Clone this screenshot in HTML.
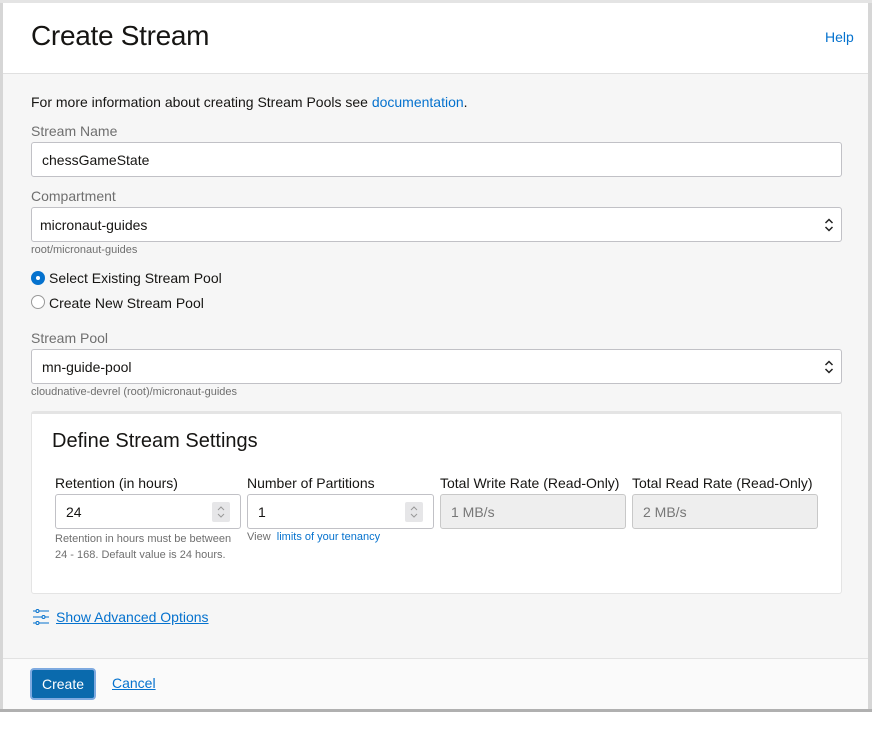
<!DOCTYPE html>
<html><head><style>
*{box-sizing:border-box;margin:0;padding:0}
body{width:873px;height:743px;background:#fff;font-family:"Liberation Sans",sans-serif;position:relative;overflow:hidden;color:#161513}
.frame{position:absolute;left:0;top:0;width:872px;height:712px;background:#d6d6d6;border-top:3px solid #e4e4e4}
.hdr{position:absolute;left:3px;top:3px;width:865px;height:71px;background:#fff;border-bottom:1px solid #e0e0e0}
.body{position:absolute;left:3px;top:74px;width:865px;height:585px;background:#f6f6f6}
.ftr{position:absolute;left:3px;top:658px;width:865px;height:51px;background:#fafafa;border-top:1px solid #e2e2e2}
.shadow{position:absolute;left:0;top:709px;width:872px;height:3px;background:#b0b0b0}
.a{position:absolute;white-space:nowrap}
.lbl{font-size:14px;color:#6f6f6f}
.inp{position:absolute;background:#fff;border:1px solid #c1c1c6;border-radius:3px;font-size:14px;color:#161513;padding-left:10px;display:flex;align-items:center}
.sm{font-size:11px;color:#6f6f6f}
.blue{color:#0572ce}
.arr{position:absolute;right:6px;top:8px}
.spin{position:absolute;right:10px;top:7px;width:18px;height:20px;background:#e6e6e8;border-radius:2px}
.ro{background:#eeeeee;color:#777;border-color:#c8c8c8}
</style></head><body>
<div class="frame"></div>
<div class="hdr"></div>
<div class="body"></div>
<div class="ftr"></div>
<div class="shadow"></div>
<div class="a" style="left:31px;top:20px;font-size:28px;color:#161513;letter-spacing:-0.3px">Create Stream</div>
<div class="a blue" style="left:825px;top:29px;font-size:14px">Help</div>
<div class="a" style="left:31px;top:94px;font-size:14px">For more information about creating Stream Pools see <span class="blue">documentation</span>.</div>
<div class="a lbl" style="left:31px;top:123px">Stream Name</div>
<div class="inp" style="left:31px;top:142px;width:811px;height:35px">chessGameState</div>
<div class="a lbl" style="left:31px;top:188px">Compartment</div>
<div class="inp" style="left:31px;top:207px;width:811px;height:35px;padding-left:8px">micronaut-guides<svg class="arr" width="12" height="18" viewBox="0 0 12 18" fill="none" stroke="#222" stroke-width="1.5"><path d="M2.5 7L6 3.5L9.5 7M2.5 11L6 14.5L9.5 11"/></svg></div>
<div class="a sm" style="left:31px;top:244px">root/micronaut-guides</div>
<div class="a" style="left:31px;top:271px;width:14px;height:14px;border-radius:50%;background:#0572ce"><div style="position:absolute;left:5px;top:5px;width:4px;height:4px;border-radius:50%;background:#fff"></div></div>
<div class="a" style="left:49px;top:270px;font-size:14px">Select Existing Stream Pool</div>
<div class="a" style="left:31px;top:295px;width:14px;height:14px;border-radius:50%;border:1px solid #999;background:#fff"></div>
<div class="a" style="left:49px;top:295px;font-size:14px">Create New Stream Pool</div>
<div class="a lbl" style="left:31px;top:330px">Stream Pool</div>
<div class="inp" style="left:31px;top:349px;width:811px;height:35px;padding-left:10px">mn-guide-pool<svg class="arr" width="12" height="18" viewBox="0 0 12 18" fill="none" stroke="#222" stroke-width="1.5"><path d="M2.5 7L6 3.5L9.5 7M2.5 11L6 14.5L9.5 11"/></svg></div>
<div class="a sm" style="left:31px;top:386px">cloudnative-devrel (root)/micronaut-guides</div>
<div class="a" style="left:31px;top:411px;width:811px;height:183px;background:#fff;border:1px solid #e4e4e4;border-top:3px solid #e4e4e4;border-radius:3px"></div>
<div class="a" style="left:52px;top:430px;font-size:20px">Define Stream Settings</div>
<div class="a" style="left:55px;top:475px;font-size:14px">Retention (in hours)</div>
<div class="a" style="left:247px;top:475px;font-size:14px">Number of Partitions</div>
<div class="a" style="left:440px;top:475px;font-size:14px">Total Write Rate (Read-Only)</div>
<div class="a" style="left:632px;top:475px;font-size:14px">Total Read Rate (Read-Only)</div>
<div class="inp" style="left:55px;top:494px;width:186px;height:35px">24<svg class="spin" viewBox="0 0 18 20" fill="none" stroke="#999" stroke-width="1"><path d="M6 8L9 5L12 8M6 12L9 15L12 12"/></svg></div>
<div class="inp" style="left:247px;top:494px;width:187px;height:35px">1<svg class="spin" viewBox="0 0 18 20" fill="none" stroke="#999" stroke-width="1"><path d="M6 8L9 5L12 8M6 12L9 15L12 12"/></svg></div>
<div class="inp ro" style="left:440px;top:494px;width:186px;height:35px">1 MB/s</div>
<div class="inp ro" style="left:632px;top:494px;width:186px;height:35px">2 MB/s</div>
<div class="a sm" style="left:55px;top:531px;line-height:16px">Retention in hours must be between<br>24 - 168. Default value is 24 hours.</div>
<div class="a sm" style="left:247px;top:531px">View &nbsp;<span class="blue">limits of your tenancy</span></div>
<svg class="a" style="left:32px;top:608px" width="18" height="18" viewBox="0 0 18 18" fill="none" stroke="#0572ce" stroke-width="1"><path d="M1 3h3M7 3h10M1 9h9M13 9h4M1 15h3M7 15h10"/><circle cx="5.5" cy="3" r="1.5"/><circle cx="11.5" cy="9" r="1.5"/><circle cx="5.5" cy="15" r="1.5"/></svg>
<div class="a blue" style="left:56px;top:609px;font-size:14px;text-decoration:underline">Show Advanced Options</div>
<div class="a" style="left:30px;top:668px;width:66px;height:32px;border:2px solid #7eaae0;border-radius:4px;background:#0a6aad;color:#fff;font-size:14px;display:flex;align-items:center;justify-content:center">Create</div>
<div class="a blue" style="left:112px;top:675px;font-size:14px;text-decoration:underline">Cancel</div>
</body></html>
